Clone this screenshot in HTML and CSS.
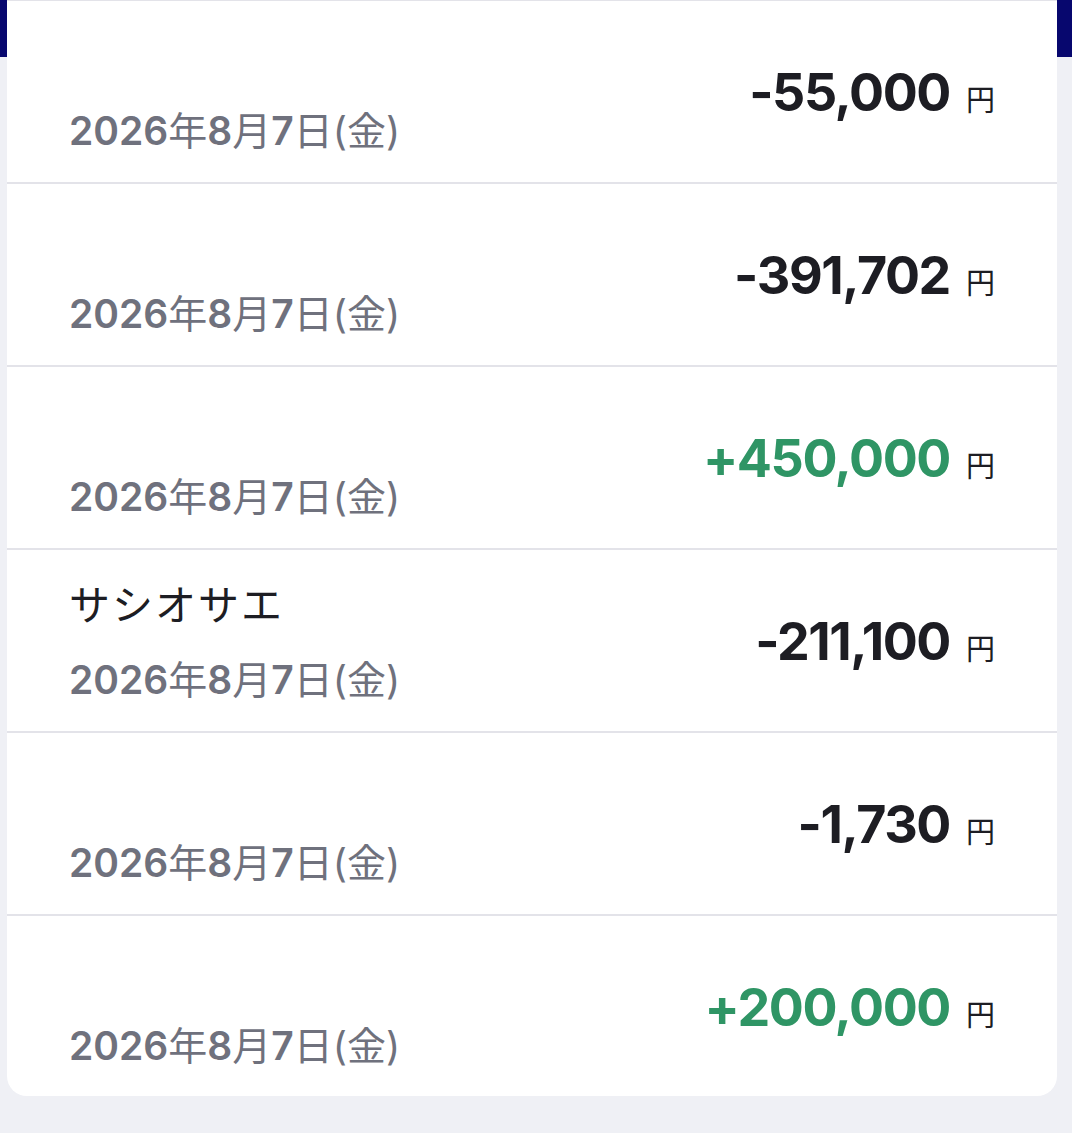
FILE: index.html
```html
<!DOCTYPE html>
<html lang="ja">
  <head>
    <meta charset="UTF-8" />
    <meta name="viewport" content="width=device-width, initial-scale=1.0" />
    <title>入出金明細</title>
    <link rel="stylesheet" href="styles.css">
  </head>
  <body>
    <div class="history-card">
      <div class="history-row">
        <div class="row-info">
          <div class="row-name"></div>
          <div class="row-date">2026<span class="jp">年</span>8<span class="jp">月</span>7<span class="jp">日(金)</span></div>
        </div>
        <div class="row-amount minus">-55,000<span class="yen">円</span></div>
      </div>
      <div class="history-row">
        <div class="row-info">
          <div class="row-name"></div>
          <div class="row-date">2026<span class="jp">年</span>8<span class="jp">月</span>7<span class="jp">日(金)</span></div>
        </div>
        <div class="row-amount minus">-391,702<span class="yen">円</span></div>
      </div>
      <div class="history-row">
        <div class="row-info">
          <div class="row-name"></div>
          <div class="row-date">2026<span class="jp">年</span>8<span class="jp">月</span>7<span class="jp">日(金)</span></div>
        </div>
        <div class="row-amount plus">+450,000<span class="yen">円</span></div>
      </div>
      <div class="history-row">
        <div class="row-info">
          <div class="row-name">サシオサエ</div>
          <div class="row-date">2026<span class="jp">年</span>8<span class="jp">月</span>7<span class="jp">日(金)</span></div>
        </div>
        <div class="row-amount minus">-211,100<span class="yen">円</span></div>
      </div>
      <div class="history-row">
        <div class="row-info">
          <div class="row-name"></div>
          <div class="row-date">2026<span class="jp">年</span>8<span class="jp">月</span>7<span class="jp">日(金)</span></div>
        </div>
        <div class="row-amount minus">-1,730<span class="yen">円</span></div>
      </div>
      <div class="history-row">
        <div class="row-info">
          <div class="row-name"></div>
          <div class="row-date">2026<span class="jp">年</span>8<span class="jp">月</span>7<span class="jp">日(金)</span></div>
        </div>
        <div class="row-amount plus">+200,000<span class="yen">円</span></div>
      </div>
    </div>
  </body>
</html>
```

FILE: styles.css
```css
body {
  margin: 0;
  font-family: Inter, "Noto Sans CJK JP", sans-serif;
  background: linear-gradient(#07076e 0, #07076e 57px, #eff0f5 57px);
  background-repeat: no-repeat;
  background-color: #eff0f5;
  min-height: 1133px;
}
.history-card {
  margin: 0 15px 0 7px;
  background-color: #fff;
  border-top: 1px solid #e3e3e9;
  border-radius: 0 0 20px 20px;
}
.history-row {
  display: flex;
  align-items: center;
  justify-content: space-between;
  height: 181px;
  padding: 0 62px;
  border-bottom: 2px solid #e3e3e9;
}
.history-row:last-child {
  height: 180px;
  border-bottom: none;
}
.row-info {
  display: flex;
  flex-direction: column;
  gap: 25px;
  align-self: flex-start;
  padding-top: 30px;
}
.row-name {
  height: 50px;
  line-height: 50px;
  font-size: 41px;
  color: #1d1d23;
  letter-spacing: 2px;
}
.row-date {
  line-height: 50px;
  font-size: 39px;
  font-weight: 600;
  color: #6f717d;
}
.row-date .jp {
  font-weight: 400;
}
.row-amount {
  font-size: 52px;
  font-weight: 700;
  letter-spacing: -1.4px;
  color: #1d1d23;
  margin-top: 2px;
}
.row-amount.plus {
  color: #2f9565;
}
.yen {
  font-size: 29px;
  font-weight: 400;
  letter-spacing: 0;
  color: #1d1d23;
  margin-left: 16px;
}
```
